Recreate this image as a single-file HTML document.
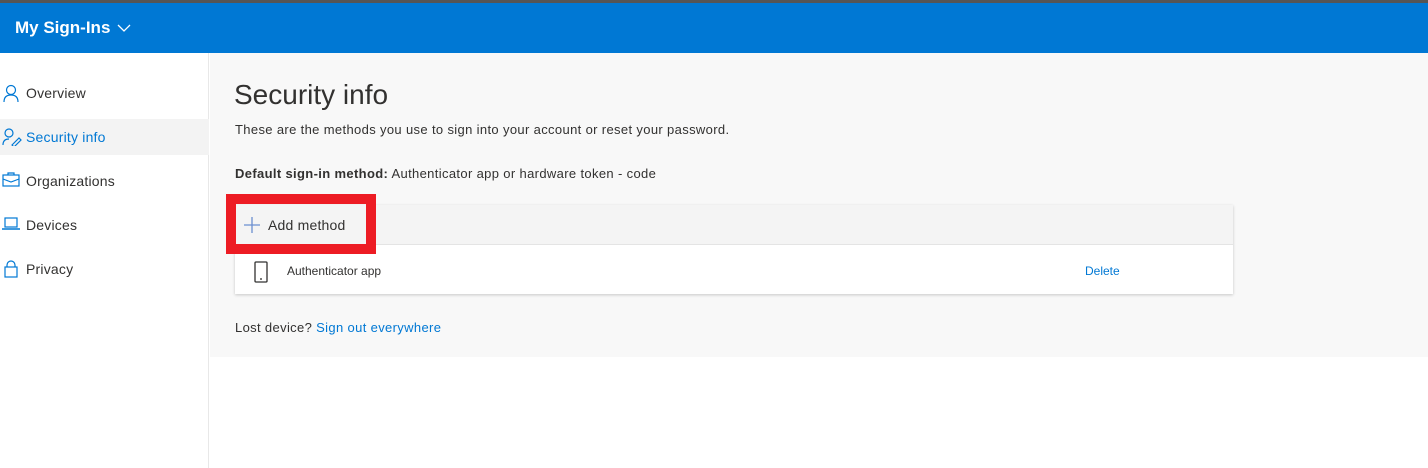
<!DOCTYPE html>
<html><head><style>
*{margin:0;padding:0;box-sizing:border-box}
body{width:1428px;height:468px;overflow:hidden;background:#fff;font-family:"Segoe UI","Liberation Sans",sans-serif;position:relative;color:#323130}
.top{position:absolute;left:0;top:0;width:1428px;height:3px;background:#555}
.hdr{position:absolute;left:0;top:3px;width:1428px;height:50px;background:#0078d4;color:#fff}
.hdr .t{position:absolute;left:15px;top:15px;font-size:17px;font-weight:bold}
.side{position:absolute;left:0;top:53px;width:209px;height:415px;background:#fff;border-right:1px solid #e8e8e8}
.item{position:absolute;left:0;width:209px;height:36px;font-size:14px;color:#323130}
.item span{position:absolute;left:26px;top:10px;letter-spacing:0.2px}
.item svg{position:absolute;left:2px;top:9px}
.main{position:absolute;left:210px;top:53px;width:1218px;height:304px;background:#f8f8f8}
.card{position:absolute;left:235px;top:205px;width:998px;height:89px;background:#fff;box-shadow:0 1px 3px rgba(0,0,0,.2)}
.ch{position:absolute;left:0;top:0;width:998px;height:40px;background:#f4f4f4;border-bottom:1px solid #e4e4e4}
.red{position:absolute;left:226px;top:194px;width:150px;height:60px;border:10px solid #ed1c24}
.ls{letter-spacing:0.35px}
a{color:#0078d4;text-decoration:none}
</style></head><body>
<div class="top"></div>
<div class="hdr"><div class="t">My Sign-Ins <svg width="14" height="10" viewBox="0 0 14 10" style="margin-left:2px"><path d="M1 2l6 6 6-6" fill="none" stroke="#fff" stroke-width="1.3"/></svg></div></div>
<div class="side">
<div class="item" style="top:22px"><svg width="18" height="18" viewBox="0 0 18 18"><circle cx="9" cy="6" r="4.5" fill="none" stroke="#0078d4" stroke-width="1.2"/><path d="M2 18c0-5 3-7 7-7s7 2 7 7" fill="none" stroke="#0078d4" stroke-width="1.2"/></svg><span>Overview</span></div>
<div class="item" style="top:66px;background:#f3f3f3"><svg width="20" height="18" viewBox="0 0 20 18"><circle cx="7" cy="5" r="4" fill="none" stroke="#0078d4" stroke-width="1.2"/><path d="M1 17c0-4 2-6 6-6" fill="none" stroke="#0078d4" stroke-width="1.2"/><path d="M10 17l7-7 2 2-7 7z" fill="none" stroke="#0078d4" stroke-width="1.2"/></svg><span style="color:#0078d4">Security info</span></div>
<div class="item" style="top:110px"><svg width="18" height="16" viewBox="0 0 18 16"><rect x="1" y="3" width="16" height="11" fill="none" stroke="#0078d4" stroke-width="1.2"/><path d="M6 3V1h6v2M1 7l8 3 8-3" fill="none" stroke="#0078d4" stroke-width="1.2"/></svg><span>Organizations</span></div>
<div class="item" style="top:154px"><svg width="18" height="16" viewBox="0 0 18 16"><rect x="3" y="2" width="12" height="9" fill="none" stroke="#0078d4" stroke-width="1.2"/><path d="M0 13h18" stroke="#0078d4" stroke-width="1.4"/></svg><span>Devices</span></div>
<div class="item" style="top:198px"><svg width="18" height="18" viewBox="0 0 18 18"><rect x="3" y="7" width="12" height="10" fill="none" stroke="#0078d4" stroke-width="1.2"/><path d="M5 7V5a4 4 0 018 0v2" fill="none" stroke="#0078d4" stroke-width="1.2"/></svg><span>Privacy</span></div>
</div>
<div class="main"></div>
<div style="position:absolute;left:234px;top:79px;font-size:28px;color:#323130">Security info</div>
<div class="ls" style="position:absolute;left:235px;top:122px;font-size:13px">These are the methods you use to sign into your account or reset your password.</div>
<div class="ls" style="position:absolute;left:235px;top:166px;font-size:13px"><b>Default sign-in method:</b> Authenticator app or hardware token - code</div>
<div class="card"><div class="ch">
<svg style="position:absolute;left:9px;top:12px" width="16" height="16" viewBox="0 0 16 16"><path d="M8 0v16M0 8h16" stroke="#6b8fd0" stroke-width="1.3"/></svg>
<div style="position:absolute;left:33px;top:12px;font-size:14px;letter-spacing:0.2px">Add method</div></div>
<svg style="position:absolute;left:19px;top:56px" width="14" height="22" viewBox="0 0 14 22"><rect x="1" y="1" width="12" height="20" rx="1" fill="none" stroke="#323130" stroke-width="1.3"/><path d="M6 18h2" stroke="#323130" stroke-width="1.3"/></svg>
<div style="position:absolute;left:52px;top:59px;font-size:12px">Authenticator app</div>
<a style="position:absolute;left:850px;top:59px;font-size:12px">Delete</a>
</div>
<div class="red"></div>
<div class="ls" style="position:absolute;left:235px;top:320px;font-size:13px">Lost device? <a>Sign out everywhere</a></div>
</body></html>
